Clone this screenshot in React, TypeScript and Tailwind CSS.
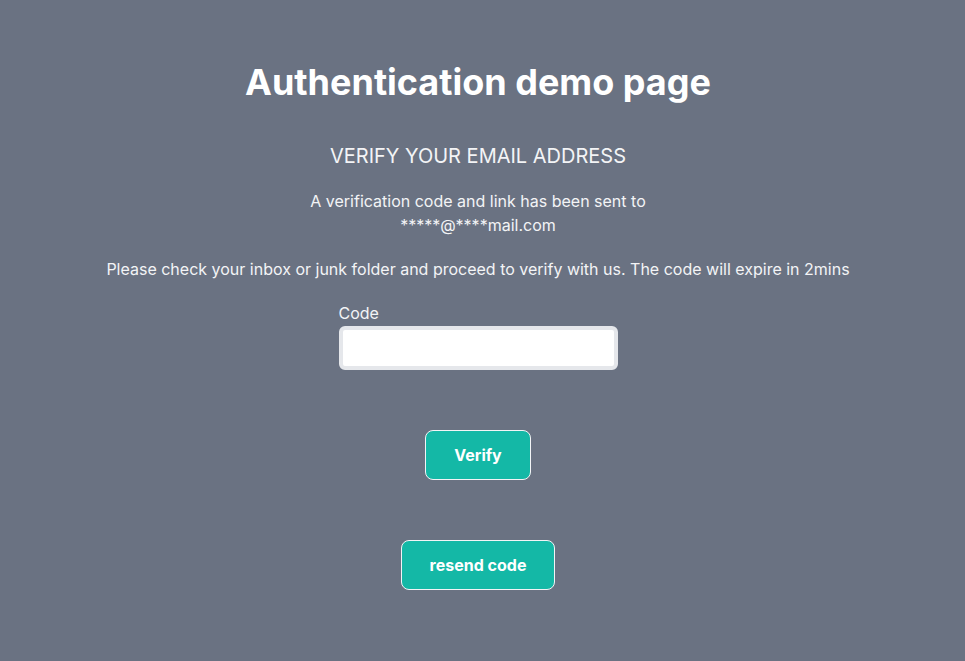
export default function App() {
  return (
    <main
      className="flex min-h-[661px] flex-col items-center bg-gray-500 pt-[62px] pr-[9px] text-center text-white"
      style={{ fontFamily: 'Inter, "Noto Sans", sans-serif' }}
    >
      <h1 className="text-4xl font-bold leading-10">Authentication demo page</h1>

      <h2 className="mt-10 text-xl leading-7 text-gray-100">VERIFY YOUR EMAIL ADDRESS</h2>

      <p className="mt-[19px] text-base leading-6 text-gray-100">
        A verification code and link has been sent to
        <br />
        *****@****mail.com
      </p>

      <p className="mt-5 text-base leading-6 text-gray-100">
        Please check your inbox or junk folder and proceed to verify with us. The code will expire in 2mins
      </p>

      <form className="mt-5 flex flex-col items-center" onSubmit={(e) => e.preventDefault()}>
        <div className="flex flex-col items-start">
          <label htmlFor="code" className="text-base leading-6 text-gray-100">
            Code
          </label>
          <input
            id="code"
            type="text"
            className="mt-px h-11 w-[279px] rounded-md border-4 border-gray-200 bg-white px-2 text-gray-900 outline-none"
          />
        </div>

        <button
          type="submit"
          className="mt-[60px] rounded-lg border border-gray-100 bg-[#14b8a6] px-7 py-3 text-base font-bold leading-6 text-white"
        >
          Verify
        </button>
      </form>

      <button
        type="button"
        className="mt-[60px] rounded-lg border border-gray-100 bg-[#14b8a6] px-7 py-3 text-base font-bold leading-6 text-white"
      >
        resend code
      </button>
    </main>
  );
}
